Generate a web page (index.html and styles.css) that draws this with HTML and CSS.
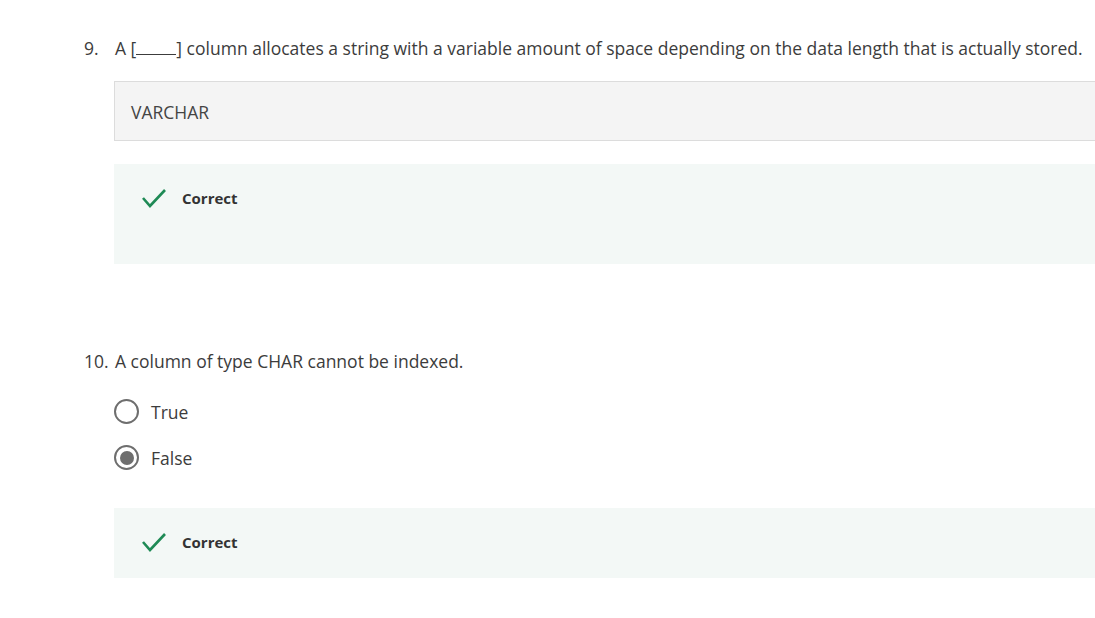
FILE: index.html
```html
<!DOCTYPE html>
<html>
<head>
<meta charset="utf-8">
<link rel="stylesheet" href="styles.css">
</head>
<body>
<div class="page">
  <section class="question q9">
    <div class="q-head">
      <span class="q-num">9.</span>
      <span class="q-text">A [<span class="blank"></span>] column allocates a string with a variable amount of space depending on the data length that is actually stored.</span>
    </div>
    <div class="answer-box">VARCHAR</div>
    <div class="feedback tall">
      <svg class="check" width="26" height="22" viewBox="0 0 26 22"><path d="M2 11 L9 19 L24 3" fill="none" stroke="#1e8a55" stroke-width="2.6"/></svg>
      <span class="fb-text">Correct</span>
    </div>
  </section>

  <section class="question q10">
    <div class="q-head">
      <span class="q-num">10.</span>
      <span class="q-text">A column of type CHAR cannot be indexed.</span>
    </div>
    <div class="options">
      <label class="option"><span class="radio"></span><span>True</span></label>
      <label class="option"><span class="radio checked"></span><span>False</span></label>
    </div>
    <div class="feedback">
      <svg class="check" width="26" height="22" viewBox="0 0 26 22"><path d="M2 11 L9 19 L24 3" fill="none" stroke="#1e8a55" stroke-width="2.6"/></svg>
      <span class="fb-text">Correct</span>
    </div>
  </section>
</div>
</body>
</html>
```
FILE: styles.css
```css
html, body {
  margin: 0;
  padding: 0;
  background: #fff;
}
body {
  font-family: "Open Sans", "Noto Sans", sans-serif;
  font-size: 17.5px;
  color: #3c3c3c;
  overflow: hidden;
}
.page {
  padding: 36px 0 0 84px;
  width: 1011px;
}
.q-head {
  display: flex;
  line-height: 24px;
}
.q-num {
  width: 31px;
  flex: none;
}
.q-text {
  white-space: nowrap;
}
.blank {
  display: inline-block;
  width: 40px;
  border-bottom: 1px solid #3c3c3c;
  height: 16px;
  vertical-align: baseline;
}
.answer-box {
  margin: 21px 0 0 30px;
  height: 58px;
  line-height: 60px;
  background: #f4f4f4;
  border: 1px solid #dcdcdc;
  border-right: none;
  padding-left: 16px;
  color: #444;
}
.feedback {
  margin: 23px 0 0 30px;
  background: #f3f8f6;
  display: flex;
  align-items: center;
  gap: 15px;
  padding: 23px 0 25px 27px;
  height: 22px;
  box-sizing: content-box;
}
.feedback.tall {
  align-items: flex-start;
  height: 52px;
}
.check {
  display: block;
  flex: none;
}
.fb-text {
  font-size: 15px;
  font-weight: 700;
  color: #333;
  line-height: 22px;
}
.q10 {
  margin-top: 85px;
}
.options {
  margin: 26px 0 0 30px;
  display: flex;
  flex-direction: column;
  gap: 21px;
}
.option {
  display: flex;
  align-items: center;
  gap: 12px;
  line-height: 24px;
  color: #3c3c3c;
}
.radio {
  width: 21px;
  height: 21px;
  border: 2px solid #6e6e6e;
  border-radius: 50%;
  box-sizing: content-box;
  position: relative;
  flex: none;
}
.radio.checked::after {
  content: "";
  position: absolute;
  left: 3.5px;
  top: 3.5px;
  width: 14px;
  height: 14px;
  border-radius: 50%;
  background: #6e6e6e;
}
.q10 .feedback {
  margin-top: 38px;
}
```
